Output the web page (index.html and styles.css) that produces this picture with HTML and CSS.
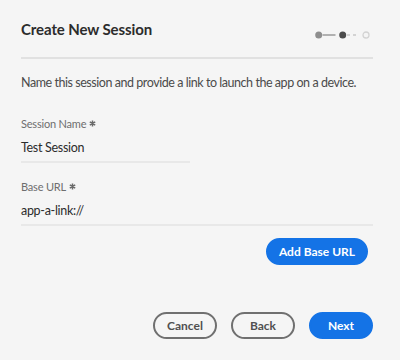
FILE: index.html
```html
<!DOCTYPE html>
<html lang="en">
<head>
    <meta charset="UTF-8">
    <meta name="viewport" content="width=device-width, initial-scale=1.0">
    <title>Create New Session</title>
    <link rel="stylesheet" href="styles.css">
</head>
<body>
    <div class="dialog">
        <div class="dialog-header">
            <h1>Create New Session</h1>
            <svg class="stepper" width="56" height="10" viewBox="0 0 56 10">
                <circle cx="3.7" cy="5" r="3.5" fill="#8e8e8e"/>
                <line x1="7.5" y1="5" x2="20.5" y2="5" stroke="#9a9a9a" stroke-width="1.5"/>
                <circle cx="27.7" cy="5" r="3.5" fill="#4b4b4b"/>
                <line x1="32" y1="5" x2="44" y2="5" stroke="#c8c8c8" stroke-width="1.5" stroke-dasharray="3 3"/>
                <circle cx="51" cy="5" r="3" fill="none" stroke="#d3d3d3" stroke-width="1.3"/>
            </svg>
        </div>
        <div class="divider"></div>

        <p class="description">Name this session and provide a link to launch the app on a device.</p>

        <div class="field field-short">
            <label>Session Name
                <svg class="req" width="7" height="7" viewBox="0 0 8 8">
                    <path d="M4 0.5V7.5M0.9 2.2L7.1 5.8M7.1 2.2L0.9 5.8" stroke="#6a6a6a" stroke-width="1.7"/>
                </svg>
            </label>
            <div class="value">Test Session</div>
        </div>

        <div class="field">
            <label>Base URL
                <svg class="req" width="7" height="7" viewBox="0 0 8 8">
                    <path d="M4 0.5V7.5M0.9 2.2L7.1 5.8M7.1 2.2L0.9 5.8" stroke="#6a6a6a" stroke-width="1.7"/>
                </svg>
            </label>
            <div class="value">app-a-link://</div>
        </div>

        <div class="add-row">
            <button class="btn btn-cta">Add Base URL</button>
        </div>

        <div class="dialog-footer">
            <button class="btn btn-secondary">Cancel</button>
            <button class="btn btn-secondary">Back</button>
            <button class="btn btn-cta">Next</button>
        </div>
    </div>
</body>
</html>
```

FILE: styles.css
```css
body {
    margin: 0;
    background-color: #f5f5f5;
    font-family: Lato, "Open Sans", sans-serif;
    color: #2c2c2c;
}

.dialog {
    padding: 19px 27px 0 21px;
}

.dialog-header {
    display: flex;
    justify-content: space-between;
    align-items: flex-start;
}

.dialog-header h1 {
    margin: 0;
    font-size: 15px;
    line-height: 20px;
    font-weight: 700;
    letter-spacing: -0.1px;
    color: #2c2c2c;
}

.stepper {
    margin-top: 11px;
    margin-right: 2px;
}

.divider {
    height: 2px;
    background-color: #e1e1e1;
    margin-top: 17px;
}

.description {
    margin: 16px 0 0;
    font-size: 12.5px;
    line-height: 16px;
    letter-spacing: -0.45px;
    color: #4b4b4b;
}

.field {
    margin-top: 26px;
    border-bottom: 2px solid #e8e8e8;
    padding-bottom: 5px;
}

.field + .field {
    margin-top: 17px;
}

.field-short {
    width: 169px;
}

.field label {
    display: flex;
    align-items: center;
    gap: 3px;
    font-size: 11px;
    line-height: 14px;
    letter-spacing: -0.2px;
    color: #6e6e6e;
}

.req {
    margin-top: -1px;
}

.value {
    margin-top: 9px;
    font-size: 12.5px;
    line-height: 16px;
    letter-spacing: -0.3px;
    color: #2c2c2c;
}

.add-row {
    display: flex;
    justify-content: flex-end;
    padding-right: 5px;
    margin-top: 12px;
}

.btn {
    box-sizing: border-box;
    height: 27px;
    border-radius: 14px;
    padding: 0 11px;
    font-family: inherit;
    font-size: 12px;
    font-weight: 700;
    cursor: pointer;
}

.btn-cta {
    background-color: #1473e6;
    border: 2px solid #1473e6;
    color: white;
}

.btn-secondary {
    background-color: transparent;
    border: 2px solid #707070;
    color: #505050;
}

.dialog-footer {
    display: flex;
    justify-content: flex-end;
    gap: 14px;
    margin-top: 47px;
}

.dialog-footer .btn {
    min-width: 64px;
}
```
